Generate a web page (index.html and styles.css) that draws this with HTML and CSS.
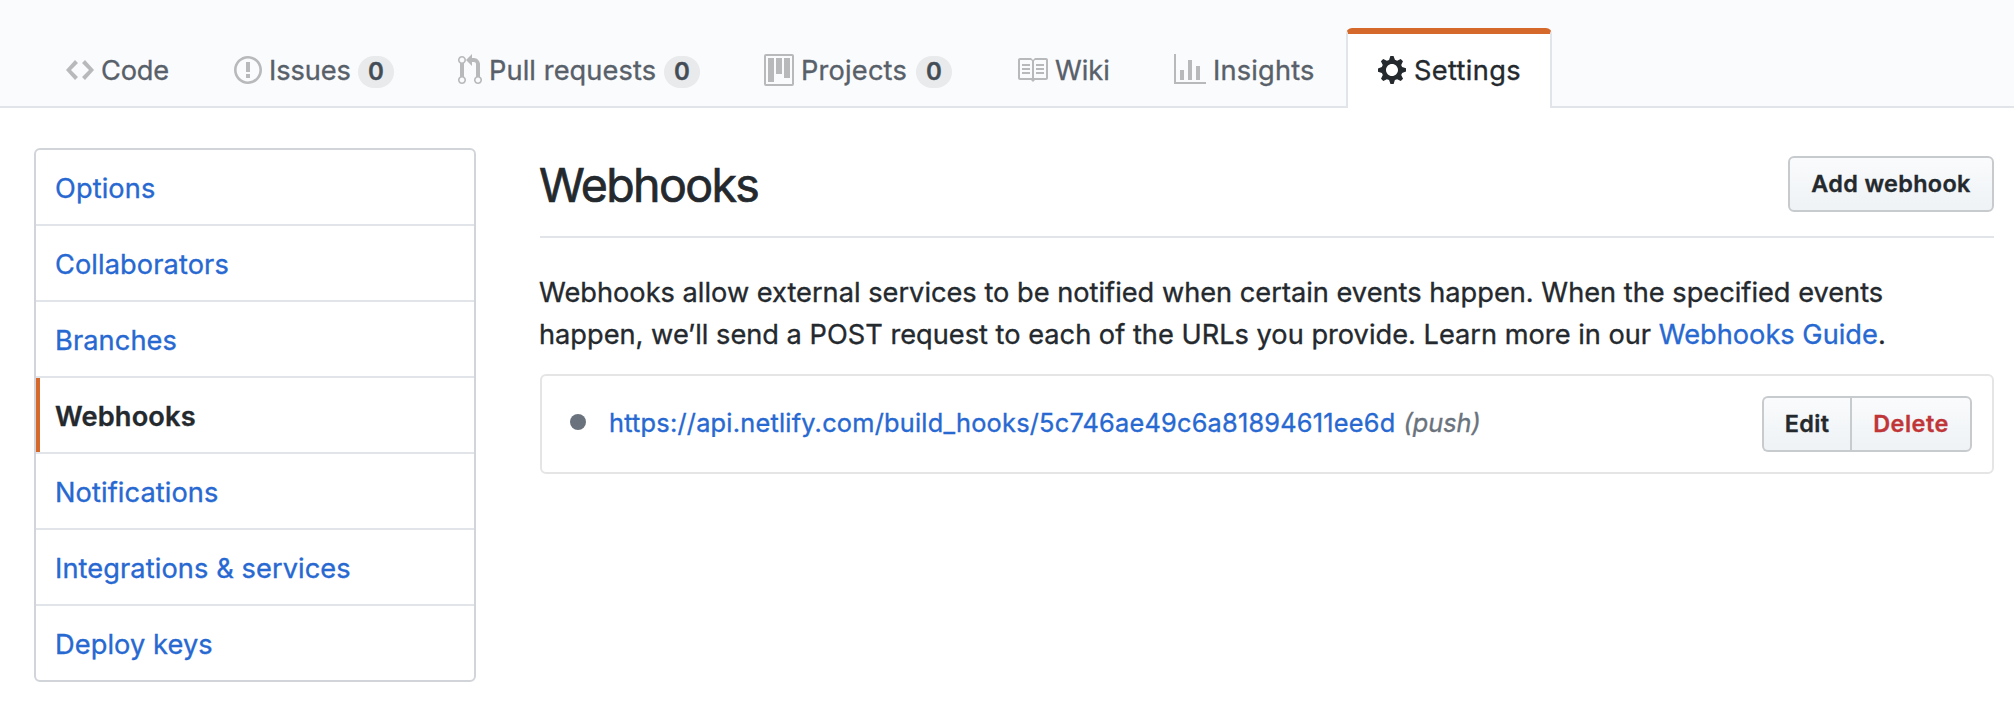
FILE: index.html
```html
<!DOCTYPE html>
<html lang="en">
<head>
<meta charset="utf-8">
<title>Webhooks</title>
<link rel="stylesheet" href="styles.css">
</head>
<body>
<nav class="tabs">
  <a class="tab tab-code"><svg class="icon" width="28" height="32" viewBox="0 0 14 16"><path d="M9.5 3L8 4.5 11.5 8 8 11.5 9.5 13 14 8 9.5 3zm-5 0L0 8l4.5 5L6 11.5 2.5 8 6 4.5 4.5 3z"/></svg><span class="label">Code</span></a>
  <a class="tab tab-issues"><svg class="icon" width="28" height="32" viewBox="0 0 14 16"><path fill-rule="evenodd" d="M7 2.3c3.14 0 5.7 2.56 5.7 5.7s-2.56 5.7-5.7 5.7A5.71 5.71 0 0 1 1.3 8c0-3.14 2.56-5.7 5.7-5.7zM7 1C3.14 1 0 4.14 0 8s3.14 7 7 7 7-3.14 7-7-3.14-7-7-7zm1 3H6v5h2V4zm0 6H6v2h2v-2z"/></svg><span class="label">Issues</span><span class="counter">0</span></a>
  <a class="tab tab-pulls"><svg class="icon" width="24" height="32" viewBox="0 0 12 16"><path fill-rule="evenodd" d="M11 11.28V5c-.03-.78-.34-1.47-.94-2.06C9.46 2.35 8.78 2.03 8 2H7V0L4 3l3 3V4h1c.27.02.48.11.69.31.21.2.3.42.31.69v6.28A1.993 1.993 0 0 0 10 15a1.993 1.993 0 0 0 1-3.72zm-1 2.92c-.66 0-1.2-.55-1.2-1.2 0-.65.55-1.2 1.2-1.2.65 0 1.2.55 1.2 1.2 0 .65-.55 1.2-1.2 1.2zM4 3c0-1.11-.89-2-2-2a1.993 1.993 0 0 0-1 3.72v6.56A1.993 1.993 0 0 0 2 15a1.993 1.993 0 0 0 1-3.72V4.72c.59-.34 1-.98 1-1.72zm-.8 10c0 .66-.55 1.2-1.2 1.2-.65 0-1.2-.55-1.2-1.2 0-.65.55-1.2 1.2-1.2.65 0 1.2.55 1.2 1.2zM2 4.2C1.34 4.2.8 3.65.8 3c0-.65.55-1.2 1.2-1.2.65 0 1.2.55 1.2 1.2 0 .65-.55 1.2-1.2 1.2z"/></svg><span class="label">Pull requests</span><span class="counter">0</span></a>
  <a class="tab tab-projects"><svg class="icon" width="30" height="32" viewBox="0 0 15 16"><path fill-rule="evenodd" d="M10 12h3V2h-3v10zm-4-2h3V2H6v8zm-4 4h3V2H2v12zm-1 1h13V1H1v14zM14 0H1a1 1 0 0 0-1 1v14a1 1 0 0 0 1 1h13a1 1 0 0 0 1-1V1a1 1 0 0 0-1-1z"/></svg><span class="label">Projects</span><span class="counter">0</span></a>
  <a class="tab tab-wiki"><svg class="icon" width="32" height="32" viewBox="0 0 16 16"><path fill-rule="evenodd" d="M3 5h4v1H3V5zm0 3h4V7H3v1zm0 2h4V9H3v1zm11-5h-4v1h4V5zm0 2h-4v1h4V7zm0 2h-4v1h4V9zm2-6v9c0 .55-.45 1-1 1H9.5l-1 1-1-1H2c-.55 0-1-.45-1-1V3c0-.55.45-1 1-1h5.5l1 1 1-1H15c.55 0 1 .45 1 1zm-8 .5L7.5 3H2v9h6V3.5zm7-.5H9.5l-.5.5V12h6V3z"/></svg><span class="label">Wiki</span></a>
  <a class="tab tab-insights"><svg class="icon" width="32" height="32" viewBox="0 0 16 16"><path d="M16 14v1H0V0h1v14h15zM5 13H3V8h2v5zm4 0H7V3h2v10zm4 0h-2V6h2v7z"/></svg><span class="label">Insights</span></a>
  <a class="tab tab-settings selected"><svg class="icon" width="28" height="32" viewBox="0 0 14 16"><path fill-rule="evenodd" d="M14 8.77v-1.6l-1.94-.64-.45-1.09.88-1.84-1.13-1.13-1.81.91-1.09-.45-.69-1.92h-1.6l-.63 1.94-1.11.45-1.84-.88-1.13 1.13.91 1.81-.45 1.09L0 7.23v1.59l1.94.64.45 1.09-.88 1.84 1.13 1.13 1.81-.91 1.09.45.69 1.92h1.59l.63-1.94 1.11-.45 1.84.88 1.13-1.13-.92-1.81.47-1.09L14 8.75v.02zM7 11c-1.66 0-3-1.34-3-3s1.34-3 3-3 3 1.34 3 3-1.34 3-3 3z"/></svg><span class="label">Settings</span></a>
</nav>
<div class="page">
  <aside class="menu">
    <a class="menu-item">Options</a>
    <a class="menu-item">Collaborators</a>
    <a class="menu-item">Branches</a>
    <a class="menu-item current">Webhooks</a>
    <a class="menu-item">Notifications</a>
    <a class="menu-item">Integrations &amp; services</a>
    <a class="menu-item">Deploy keys</a>
  </aside>
  <main class="content">
    <header class="subhead">
      <h1 class="title">Webhooks</h1>
      <button class="btn btn-add">Add webhook</button>
    </header>
    <p class="intro">Webhooks allow external services to be notified when certain events happen. When the specified events<br>happen, we’ll send a POST request to each of the URLs you provide. Learn more in our <a class="link">Webhooks Guide</a>.</p>
    <div class="hook">
      <i class="dot"></i>
      <span class="hook-url link">https://api.netlify.com/build_hooks/5c746ae49c6a81894611ee6d</span>
      <span class="hook-event">(push)</span>
      <div class="btn-group"><button class="btn btn-edit">Edit</button><button class="btn btn-delete">Delete</button></div>
    </div>
  </main>
</div>
</body>
</html>
```

FILE: styles.css
```css
* { box-sizing: border-box; }
body {
  margin: 0;
  background: #fff;
  color: #24292e;
  font: 400 27.2px/42px Inter, "Liberation Sans", sans-serif;
  -webkit-text-stroke: 0.35px;
}
.tabs {
  display: flex;
  align-items: flex-end;
  height: 108px;
  padding-left: 34px;
  background: #fafbfc;
  box-shadow: inset 0 -2px #e1e4e8;
}
.tab {
  display: flex;
  flex: none;
  height: 80px;
  padding: 20px 30px 0;
  border: 2px solid transparent;
  border-top: 6px solid transparent;
  border-bottom: 0;
  color: #586069;
  line-height: 42px;
  white-space: nowrap;
}
.tab-code { width: 168px; letter-spacing: -0.2px; }
.tab-issues { width: 224px; letter-spacing: -0.1px; }
.tab-pulls { width: 306px; letter-spacing: 0.1px; }
.tab-projects { width: 252px; letter-spacing: 0.2px; }
.tab-wiki { width: 158px; }
.tab-insights { width: 204px; letter-spacing: 0.2px; }
.tab-settings { width: 206px; letter-spacing: 0.35px; }
.icon { flex: none; fill: #b7b9bb; }
.label { margin: -4px 0 0 7px; }
.selected {
  background: #fff;
  border-color: #d5692b #e1e4e8 #fff;
  border-radius: 6px 6px 0 0;
  color: #24292e;
}
.selected .icon { fill: #24292e; }
.selected .label { margin-left: 8px; }
.counter {
  height: 32px;
  width: 36px;
  margin: 2px 0 0 auto;
  border-radius: 16px;
  background: #e8eaeb;
  color: #444d56;
  font-size: 24px;
  font-weight: 600;
  line-height: 32px;
  letter-spacing: 0;
  text-align: center;
}
.page {
  display: flex;
  gap: 64px;
  padding: 40px 20px 0 34px;
}
.menu {
  flex: none;
  width: 442px;
  height: 534px;
  border: 2px solid #d1d5da;
  border-radius: 6px;
}
.menu-item {
  display: block;
  height: 76px;
  padding: 18px 19px 0;
  border-bottom: 2px solid #e1e4e8;
  color: #2768d1;
  letter-spacing: 0.1px;
}
.menu-item:last-child { border-bottom: 0; }
.current {
  color: #24292e;
  font-weight: 600;
  letter-spacing: 0.15px;
  box-shadow: inset 4px 0 #d5692b;
}
.content { flex: 1; min-width: 0; }
.subhead {
  display: flex;
  justify-content: space-between;
  height: 90px;
  padding-top: 8px;
  border-bottom: 2px solid #e1e4e8;
}
.title {
  margin: 0 0 0 -1px;
  font-size: 46.5px;
  font-weight: 400;
  line-height: 58px;
  letter-spacing: -1.65px;
  -webkit-text-stroke: 0.7px;
}
.btn {
  height: 56px;
  padding: 0;
  border: 2px solid #c8cbce;
  border-radius: 6px;
  background: linear-gradient(#fafbfc, #eff3f6 90%);
  color: #24292e;
  font: 600 23.4px/48px Inter, "Liberation Sans", sans-serif;
  letter-spacing: 0.35px;
}
.btn-add { width: 206px; }
.link { color: #2768d1; }
.intro { margin: 34px 0 18px -1px; white-space: nowrap; letter-spacing: 0.01px; }
.hook {
  display: flex;
  height: 100px;
  padding: 20px 20px 0 28px;
  border: 2px solid #e5e5e5;
  border-radius: 6px;
  font-size: 25.3px;
}
.dot { width: 16px; height: 16px; margin: 18px 23px 0 0; border-radius: 50%; background: #6a737d; }
.hook-url { margin-top: 6px; letter-spacing: 0.24px; }
.hook-event { margin: 6px 0 0 8px; color: #6a737d; font-style: italic; }
.btn-group { display: flex; margin-left: auto; }
.btn-edit { width: 88px; border-radius: 6px 0 0 6px; border-right: 0; }
.btn-delete { width: 122px; border-radius: 0 6px 6px 0; color: #c03537; letter-spacing: 0.5px; }
```
